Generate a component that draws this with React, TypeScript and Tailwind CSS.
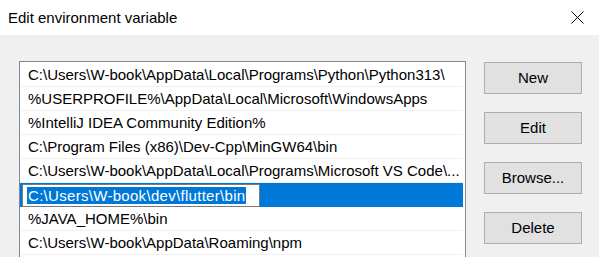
import type { FC } from "react";

const paths = [
  "C:\\Users\\W-book\\AppData\\Local\\Programs\\Python\\Python313\\",
  "%USERPROFILE%\\AppData\\Local\\Microsoft\\WindowsApps",
  "%IntelliJ IDEA Community Edition%",
  "C:\\Program Files (x86)\\Dev-Cpp\\MinGW64\\bin",
  "C:\\Users\\W-book\\AppData\\Local\\Programs\\Microsoft VS Code\\...",
  "C:\\Users\\W-book\\dev\\flutter\\bin",
  "%JAVA_HOME%\\bin",
  "C:\\Users\\W-book\\AppData\\Roaming\\npm",
];

const selected = 5;

const buttons = ["New", "Edit", "Browse...", "Delete"];

const CloseIcon: FC = () => (
  <svg width="13" height="13" viewBox="0 0 13 13" className="block">
    <path d="M0.5 0.5 L12.5 12.5 M12.5 0.5 L0.5 12.5" stroke="#000" strokeWidth="1" fill="none" />
  </svg>
);

const App: FC = () => {
  return (
    <div
      className="h-[257px] w-[599px] overflow-hidden bg-[#f0f0f0] text-[15px] text-black"
      style={{ fontFamily: '"Liberation Sans", Arial, sans-serif' }}>
      <div className="flex h-[35px] items-center justify-between bg-white pl-[8px] pr-[15px]">
        <span className="leading-[20px]">Edit environment variable</span>
        <CloseIcon />
      </div>
      <div className="flex items-start gap-[18px] pl-[19px] pt-[26px]">
        <div className="h-[220px] w-[447px] overflow-hidden border border-[#828790] bg-white pt-px">
          {paths.map((p, i) =>
            i === selected ? (
              <div key={i} className="mr-[2px] flex h-[24px] items-center bg-[#0078d7] pl-[2px]">
                <div className="flex h-[23px] w-[238px] items-center border border-[#7a7a7a] bg-white pl-[4px]">
                  <span className="whitespace-nowrap bg-[#0078d7] px-px leading-[17px] tracking-[0.3px] text-white">
                    {p}
                  </span>
                </div>
              </div>
            ) : (
              <div
                key={i}
                className="mr-[2px] flex h-[24px] items-center border-b border-[#f0f0f0] pl-[8px]">
                <span className="whitespace-nowrap leading-[20px]">{p}</span>
              </div>
            )
          )}
        </div>
        <div className="mt-px flex flex-col gap-[18px]">
          {buttons.map((b) => (
            <button
              key={b}
              className="flex h-[32px] w-[98px] items-center justify-center border border-[#adadad] bg-[#e1e1e1] leading-[20px]">
              {b}
            </button>
          ))}
        </div>
      </div>
    </div>
  );
};

export default App;
